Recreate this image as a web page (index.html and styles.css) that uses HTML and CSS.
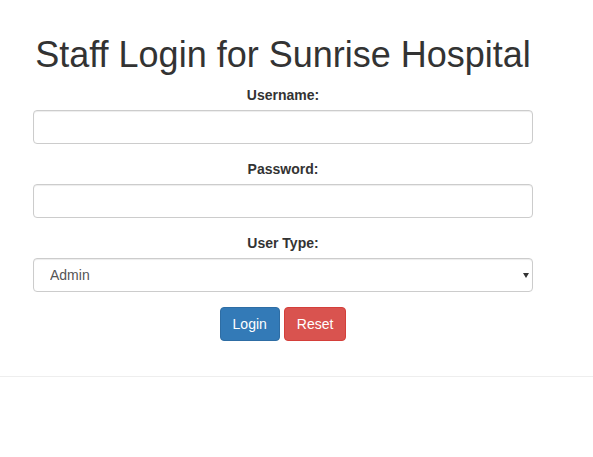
FILE: index.html
```html
<!DOCTYPE html>
<html>
<head>
<meta charset="utf-8">
<link rel="stylesheet" href="styles.css">
</head>
<body>
<div class="page">
  <h1 class="title">Staff Login for Sunrise Hospital</h1>
  <form class="login-form">
    <div class="form-group">
      <label class="label">Username:</label>
      <input class="control" type="text">
    </div>
    <div class="form-group">
      <label class="label">Password:</label>
      <input class="control" type="password">
    </div>
    <div class="form-group">
      <label class="label">User Type:</label>
      <div class="select-wrap">
        <select class="control select">
          <option>Admin</option>
        </select>
      </div>
    </div>
    <div class="actions">
      <button type="button" class="btn btn-primary">Login</button>
      <button type="reset" class="btn btn-danger">Reset</button>
    </div>
  </form>
</div>
<hr class="rule">
</body>
</html>
```
FILE: styles.css
```css
* { box-sizing: border-box; }
html, body { margin: 0; padding: 0; background: #fff; }
body {
  font-family: "Liberation Sans", Arial, sans-serif;
  font-size: 14px;
  line-height: 20px;
  color: #333;
}
.page {
  width: 500px;
  margin-left: 33px;
  padding-top: 35px;
}
.title {
  margin: 0 0 10px;
  font-size: 36px;
  font-weight: 400;
  line-height: 39.6px;
  text-align: center;
  white-space: nowrap;
}
.login-form { margin: 0; }
.form-group {
  display: flex;
  flex-direction: column;
  margin-bottom: 15px;
}
.label {
  display: block;
  text-align: center;
  font-weight: 700;
  margin-bottom: 5px;
}
.control {
  display: block;
  width: 100%;
  height: 34px;
  padding: 6px 12px;
  font-family: inherit;
  font-size: 14px;
  line-height: 20px;
  color: #555;
  background: #fff;
  border: 1px solid #ccc;
  border-radius: 4px;
  box-shadow: inset 0 1px 1px rgba(0,0,0,.075);
  outline: none;
}
.select-wrap { position: relative; }
.select {
  -webkit-appearance: none;
  appearance: none;
  padding-left: 16px;
}
.select-wrap::after {
  content: "";
  position: absolute;
  right: 4px;
  top: 15px;
  border-left: 3px solid transparent;
  border-right: 3px solid transparent;
  border-top: 5px solid #333;
}
.actions {
  display: flex;
  justify-content: center;
  gap: 4px;
}
.btn {
  display: inline-block;
  height: 34px;
  padding: 6px 12px;
  font-family: inherit;
  font-size: 14px;
  line-height: 20px;
  color: #fff;
  border: 1px solid transparent;
  border-radius: 4px;
  cursor: pointer;
}
.btn-primary { background: #337ab7; border-color: #2e6da4; }
.btn-danger { background: #d9534f; border-color: #d43f3a; }
.rule {
  margin: 35px 0 0;
  border: 0;
  border-top: 1px solid #eee;
}
```
